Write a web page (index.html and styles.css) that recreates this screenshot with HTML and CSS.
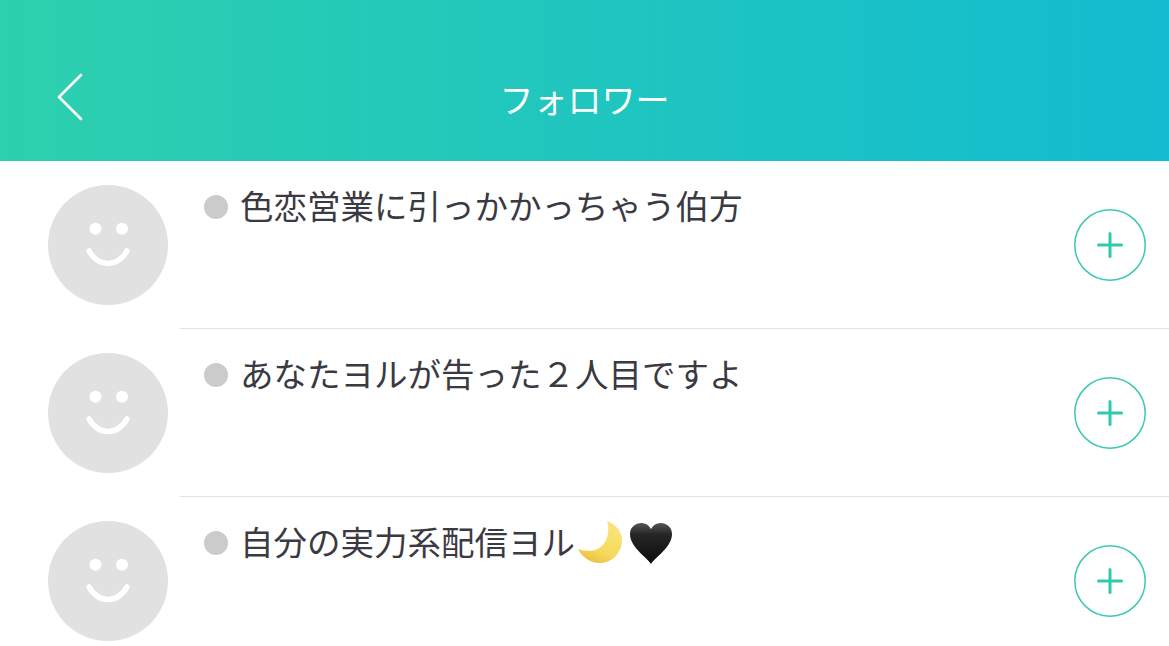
FILE: index.html
```html
<!DOCTYPE html>
<html lang="ja">
<head>
<meta charset="utf-8">
<title>フォロワー</title>
<link rel="stylesheet" href="styles.css">
</head>
<body>
<svg class="defs" width="0" height="0" aria-hidden="true">
  <defs>
    <g id="face">
      <circle cx="60" cy="60" r="60" fill="#e1e1e1"/>
      <circle cx="47.500" cy="43.700" r="6" fill="#fff"/>
      <circle cx="74" cy="43.700" r="6" fill="#fff"/>
      <path d="M41 66C47 76 54 78.500 60 78.500C66 78.500 73 76 79 66" fill="none" stroke="#fff" stroke-width="5.500" stroke-linecap="round"/>
    </g>
    <g id="plus">
      <circle cx="36" cy="36" r="35.200" fill="none" stroke="#3cc8b2" stroke-width="1.500"/>
      <path d="M24.500 36H47.500M36 24.500V47.500" fill="none" stroke="#2fc9ab" stroke-width="3" stroke-linecap="round"/>
    </g>
    <linearGradient id="moonFill" x1="0.800" y1="0.100" x2="0.400" y2="1">
      <stop offset="0" stop-color="#f9e37c"/>
      <stop offset="0.700" stop-color="#f6da5c"/>
      <stop offset="1" stop-color="#ecc244"/>
    </linearGradient>
    <linearGradient id="heartFill" x1="0" y1="0" x2="0" y2="1">
      <stop offset="0" stop-color="#555"/>
      <stop offset="0.280" stop-color="#262626"/>
      <stop offset="1" stop-color="#0c0c0c"/>
    </linearGradient>
  </defs>
</svg>
<header class="header">
  <div class="header-side">
    <svg class="back" width="28" height="48" viewBox="0 0 28 48"><path d="M25 2L3 24L25 46" fill="none" stroke="#fff" stroke-width="2.600" stroke-linecap="round" stroke-linejoin="round"/></svg>
  </div>
  <h1 class="title">フォロワー</h1>
  <div class="header-side"></div>
</header>
<main class="list">
  <section class="row">
    <svg class="avatar" width="120" height="120" viewBox="0 0 120 120"><use href="#face"/></svg>
    <div class="body">
      <div class="info"><span class="dot"></span><span class="name">色恋営業に引っかかっちゃう伯方</span></div>
      <svg class="add" width="72" height="72" viewBox="0 0 72 72"><use href="#plus"/></svg>
    </div>
  </section>
  <section class="row">
    <svg class="avatar" width="120" height="120" viewBox="0 0 120 120"><use href="#face"/></svg>
    <div class="body">
      <div class="info"><span class="dot"></span><span class="name">あなたヨルが告った２人目ですよ</span></div>
      <svg class="add" width="72" height="72" viewBox="0 0 72 72"><use href="#plus"/></svg>
    </div>
  </section>
  <section class="row">
    <svg class="avatar" width="120" height="120" viewBox="0 0 120 120"><use href="#face"/></svg>
    <div class="body">
      <div class="info">
        <span class="dot"></span><span class="name">自分の実力系配信ヨル</span>
        <svg class="emoji" width="48" height="48" viewBox="0 0 48 48"><path d="M32 2C40 5 47 12 47 21C47 34 37 44 25 44C15 44 7 38 3 30C9 32 15 32.500 20 31C30 28 36 16 32 2Z" fill="url(#moonFill)"/></svg>
        <svg class="emoji" width="44" height="44" viewBox="0 0 44 44"><path d="M22 43C17 35.500 1 26 1 13C1 6 6.500 2 12.500 2C16.500 2 20 4 22 8C24 4 27.500 2 31.500 2C37.500 2 43 6 43 13C43 26 27 35.500 22 43Z" fill="url(#heartFill)"/></svg>
      </div>
      <svg class="add" width="72" height="72" viewBox="0 0 72 72"><use href="#plus"/></svg>
    </div>
  </section>
</main>
</body>
</html>
```
FILE: styles.css
```css
html, body {
  margin: 0;
  height: 646px;
  overflow: hidden;
  background: #fff;
}

body {
  font-family: "Noto Sans CJK JP", "Noto Sans", sans-serif;
  color: #3a3a42;
}

.defs {
  display: block;
  height: 0;
}

.header {
  height: 161px;
  box-sizing: border-box;
  padding-top: 36px;
  display: grid;
  grid-template-columns: 1fr auto 1fr;
  align-items: center;
  background: linear-gradient(90deg, #2dd0ad 0%, #13bcd0 100%);
}

.header-side {
  display: flex;
  align-items: center;
  padding-left: 56px;
  padding-bottom: 4px;
}

.back {
  display: block;
}

.title {
  margin: 0;
  font-size: 34px;
  font-weight: 400;
  line-height: 44px;
  color: #fff;
}

.row {
  display: flex;
  height: 168px;
  padding-left: 48px;
}

.avatar {
  flex: none;
  margin-top: 24px;
}

.body {
  flex: 1;
  display: flex;
  justify-content: space-between;
  margin-left: 12px;
  padding: 0 23px 0 24px;
  border-bottom: 1px solid #e2e2e2;
}

.info {
  display: flex;
  align-items: center;
  align-self: flex-start;
  height: 44px;
  margin-top: 24px;
}

.dot {
  flex: none;
  width: 24px;
  height: 24px;
  border-radius: 50%;
  background: #cbcbcb;
  margin-right: 12px;
}

.name {
  font-size: 33.500px;
  line-height: 38px;
  padding-bottom: 4px;
  white-space: nowrap;
}

.emoji {
  flex: none;
  margin-right: 6px;
}

.add {
  flex: none;
  margin-top: 48px;
}
```
